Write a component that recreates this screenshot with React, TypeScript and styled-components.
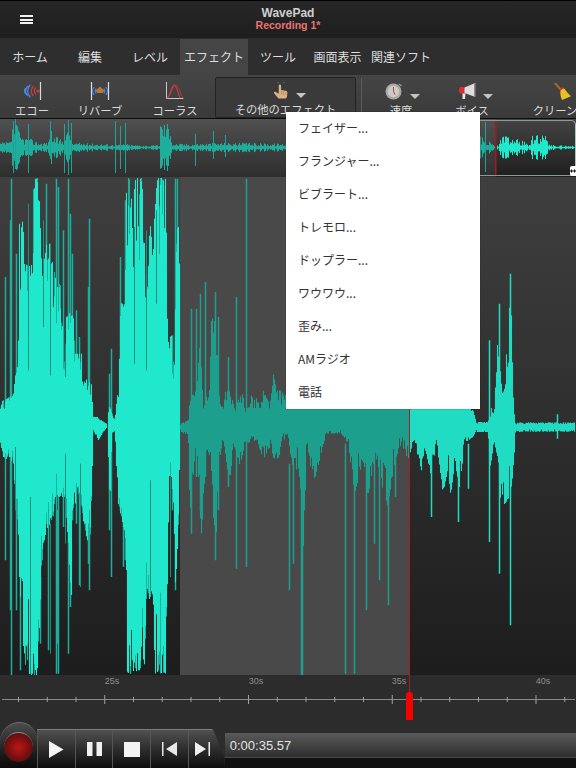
import React from 'react';
import styled, { createGlobalStyle } from 'styled-components';

const GlobalStyle = createGlobalStyle`
  html, body {
    margin: 0;
    padding: 0;
    background: #111;
  }
`;

const Page = styled.div`
  position: relative;
  display: flex;
  flex-direction: column;
  width: 576px;
  height: 768px;
  overflow: hidden;
  font-family: 'Noto Sans CJK JP', 'Liberation Sans', sans-serif;
  color: #ddd;
`;

const TitleBar = styled.header`
  position: relative;
  display: flex;
  flex-direction: column;
  align-items: center;
  justify-content: center;
  height: 38px;
  box-sizing: border-box;
  padding-bottom: 1px;
  border-top: 1px solid #000;
  background: linear-gradient(#272727, #1e1e1e);
  font-family: 'Liberation Sans', sans-serif;
  font-weight: bold;
`;

const MenuButton = styled.div`
  position: absolute;
  left: 20px;
  top: 14px;
  display: flex;
  flex-direction: column;
  gap: 1.5px;
  width: 13px;
`;

const MenuBar = styled.span`
  height: 2px;
  background: #f2f2f2;
`;

const AppName = styled.div`
  font-size: 12px;
  line-height: 13px;
  color: #cfcfcf;
`;

const FileName = styled.div`
  font-size: 10.5px;
  line-height: 11px;
  color: #e97474;
`;

const TabBar = styled.nav`
  display: flex;
  height: 37px;
  background: #2e2e2e;
`;

const Tab = styled.div<{ $w: number; $active?: boolean }>`
  display: flex;
  align-items: center;
  justify-content: center;
  width: ${(p) => p.$w}px;
  margin-top: 1px;
  font-size: 12px;
  color: #dedede;
  background: ${(p) => (p.$active ? '#454545' : 'transparent')};
`;

const Ribbon = styled.div`
  display: flex;
  height: 43px;
  overflow: hidden;
  border-bottom: 1px solid #0c0c0c;
  background: linear-gradient(#454545, #3a3a3a);
`;

const RibbonItem = styled.div<{ $w: number; $ml?: number }>`
  flex: none;
  display: flex;
  flex-direction: column;
  align-items: center;
  width: ${(p) => p.$w}px;
  margin-left: ${(p) => p.$ml ?? 0}px;
`;

const RibbonGroup = styled.div`
  flex: none;
  display: flex;
  flex-direction: column;
  align-items: center;
  box-sizing: border-box;
  width: 141px;
  height: 41px;
  margin: 2px 0 0 1px;
  border: 1px solid #222;
  border-radius: 2px;
  background: #3a3a3a;
`;

const RibbonDivider = styled.div`
  flex: none;
  width: 1px;
  height: 40px;
  margin: 3px 4px 0 5px;
  background: #5c5c5c;
`;

const IconRow = styled.div<{ $pad?: number; $h?: number }>`
  display: flex;
  align-items: flex-end;
  gap: 7px;
  height: ${(p) => p.$h ?? 25}px;
  padding-left: ${(p) => p.$pad ?? 0}px;
`;

const RibbonLabel = styled.div`
  margin-top: 3px;
  font-size: 11.3px;
  line-height: 15px;
  white-space: nowrap;
  color: #dcdcdc;
`;

const DropArrow = styled.span`
  width: 0;
  height: 0;
  margin-bottom: 1px;
  border-left: 5.5px solid transparent;
  border-right: 5.5px solid transparent;
  border-top: 5px solid #c4c4c4;
`;

const OverviewStrip = styled.div`
  position: relative;
  height: 58px;
  background: linear-gradient(#434343, #1f1f1f);
`;

const OverviewFrame = styled.div`
  position: absolute;
  left: 400px;
  right: 0;
  top: 1px;
  bottom: 1px;
  border-top: 1px solid #8c9a9a;
  border-bottom: 1px solid #8c9a9a;
  border-right: 1px solid #b5c0c0;
  border-radius: 0 5px 5px 0;
`;

const FrameHandle = styled.div`
  position: absolute;
  right: 0;
  bottom: 1px;
  display: flex;
  align-items: center;
  justify-content: center;
  width: 6px;
  height: 10px;
  border-radius: 2px 0 0 2px;
  background: #fff;
`;

const Canvas = styled.svg`
  display: block;
  position: absolute;
  left: 0;
  top: 0;
`;

const WaveArea = styled.div`
  position: relative;
  height: 499px;
  background: linear-gradient(#3f3f3f, #1d1d1d);
`;

const Ruler = styled.div`
  position: relative;
  height: 47px;
  background: #2c2c2c;
`;

const PlayLine = styled.div`
  position: absolute;
  left: 409px;
  top: 176px;
  width: 1px;
  height: 518px;
  background: #a81d1d;
`;

const PlayThumb = styled.div`
  position: absolute;
  left: 406px;
  top: 692px;
  width: 7px;
  height: 28px;
  border-radius: 3px 3px 0 0;
  background: #f60000;
`;

const EffectMenu = styled.ul`
  position: absolute;
  left: 286px;
  top: 112px;
  width: 194px;
  margin: 0;
  padding: 0;
  list-style: none;
  background: #fff;
  box-shadow: 0 0 1px rgba(0, 0, 0, 0.5);
`;

const EffectItem = styled.li`
  display: flex;
  align-items: center;
  box-sizing: border-box;
  height: 33px;
  padding: 0 0 2px 12px;
  font-size: 12px;
  color: #333;
`;

const Transport = styled.footer`
  display: flex;
  align-items: flex-end;
  height: 46px;
  background: #2c2c2c;
`;

const RecordDome = styled.div`
  flex: none;
  display: flex;
  justify-content: center;
  align-items: center;
  width: 37px;
  height: 46px;
  box-sizing: border-box;
  padding-top: 2px;
  border-radius: 20px 18px 0 0;
  border-top: 1px solid #6a6a6a;
  background: linear-gradient(#4c4c4c, #1a1a1a 70%, #0a0a0a);
`;

const RecordButton = styled.div`
  width: 29px;
  height: 30px;
  box-sizing: border-box;
  border-radius: 50%;
  border-top: 1px solid #8a8a8a;
  background: radial-gradient(circle, #b81818 0, #a01212 24%, #7a1010 50%, #4a1010 85%, #361616 100%);
`;

const Controls = styled.div`
  flex: none;
  display: flex;
  height: 39px;
  box-sizing: border-box;
  border-top: 1px solid #7c7c7c;
  background: linear-gradient(#505050, #2a2a2a 55%, #0d0d0d);
`;

const ControlButton = styled.div<{ $w?: number; $last?: boolean }>`
  display: flex;
  align-items: center;
  justify-content: ${(p) => (p.$last ? 'flex-end' : 'center')};
  width: ${(p) => p.$w ?? 37.7}px;
  padding-right: ${(p) => (p.$last ? 2 : 0)}px;
  border-left: 1px solid #555;
  box-sizing: border-box;
`;

const ControlEnd = styled.div`
  flex: none;
  width: 13px;
  height: 39px;
  background: linear-gradient(#505050, #2a2a2a 55%, #0d0d0d);
  clip-path: polygon(0 0, 10% 0, 100% 75%, 100% 100%, 0 100%);
`;

const TimeColumn = styled.div`
  flex: 1;
  display: flex;
  flex-direction: column;
  height: 35px;
  background: #101010;
`;

const TimeBar = styled.div`
  display: flex;
  align-items: center;
  height: 24px;
  padding-left: 5px;
  border-bottom: 1px solid #4a4a4a;
  background: linear-gradient(#5a5a5a, #2e2e2e);
  font: 13px 'Liberation Sans', sans-serif;
  color: #e2e2e2;
`;

const BRIGHT = '#20e8cc';
const DIM = '#1d9f8e';
const RIGHT = '#1fdcc2';
const EDGE = '#1caf9c';

type Pt = [number, number];

const interp = (pts: Pt[], x: number) => {
  for (let i = 1; i < pts.length; i++) {
    const [x0, y0] = pts[i - 1];
    const [x1, y1] = pts[i];
    if (x <= x1) return x1 === x0 ? y1 : y0 + ((y1 - y0) * (x - x0)) / (x1 - x0);
  }
  return pts[pts.length - 1][1];
};

const CENTER = 748;

// envelopes were read off a 3x crop of the wave, so every value is divided by 3.
// cut = how deep a column may fall short of its envelope
const columnsPath = (top: Pt[], bottom: Pt[], cut: number, seed0: number) => {
  let seed = seed0;
  const next = () => {
    seed = (seed * 9301 + 49297) % 233280;
    return seed / 233280;
  };
  let d = '';
  const from = Math.ceil(top[0][0] / 3);
  const to = Math.floor(top[top.length - 1][0] / 3);
  for (let x = from; x < to; x++) {
    const zx = x * 3 + 1.5;
    const a = interp(top, zx);
    const b = interp(bottom, zx);
    const ra = next();
    const rb = next();
    const t = CENTER + (a - CENTER) * (1 - cut * ra * ra * ra);
    const u = CENTER + (b - CENTER) * (1 - cut * rb * rb * rb);
    d += `M${x + 0.5} ${(t / 3).toFixed(1)}V${(u / 3).toFixed(1)}`;
  }
  return d;
};

const oneTop: Pt[] = [[0, 700], [8, 670], [40, 655], [45, 600], [55, 560], [58, 130], [70, 130], [72, 260], [95, 260], [100, 3], [120, 3], [122, 200], [132, 290], [135, 200], [150, 200], [152, 260], [160, 250], [165, 300], [185, 330], [190, 500], [195, 570], [200, 400], [222, 420], [225, 530], [245, 530], [250, 600], [275, 620], [280, 720], [295, 720], [305, 730], [322, 742]];
const oneBottom: Pt[] = [[0, 790], [10, 840], [40, 860], [45, 960], [55, 1050], [58, 1200], [72, 1470], [82, 1490], [100, 1495], [115, 1495], [120, 1300], [130, 1100], [150, 1040], [160, 1030], [165, 960], [195, 960], [205, 1100], [215, 1280], [218, 1000], [240, 950], [250, 1030], [270, 1130], [278, 850], [280, 760], [296, 790], [310, 765], [322, 750]];

const twoTop: Pt[] = [[322, 742], [328, 680], [335, 700], [345, 730], [350, 670], [358, 620], [360, 320], [365, 380], [375, 380], [380, 3], [392, 3], [398, 150], [405, 3], [430, 3], [435, 280], [445, 280], [450, 130], [460, 240], [465, 3], [497, 3], [500, 190], [505, 470], [515, 470], [520, 560], [525, 500], [530, 150], [539, 150], [540, 745]];
const twoBottom: Pt[] = [[322, 750], [330, 1000], [336, 770], [345, 760], [350, 880], [355, 990], [365, 1020], [378, 1100], [382, 1490], [420, 1480], [435, 1470], [440, 1270], [460, 1260], [465, 1490], [497, 1490], [505, 1100], [507, 900], [515, 900], [522, 1000], [527, 1240], [537, 1020], [540, 760]];

const dimTop: Pt[] = [[540, 745], [545, 738], [565, 730], [570, 660], [590, 640], [600, 490], [610, 640], [625, 670], [635, 420], [650, 420], [660, 680], [670, 690], [680, 620], [690, 640], [700, 650], [705, 710], [715, 660], [730, 650], [735, 710], [745, 680], [755, 650], [770, 660], [780, 690], [790, 640], [810, 680], [820, 590], [830, 640], [840, 640], [850, 640], [1229, 640]];
const dimBottom: Pt[] = [[540, 765], [565, 775], [570, 1010], [590, 790], [600, 1000], [605, 1080], [620, 820], [632, 840], [640, 1020], [650, 1100], [660, 860], [670, 790], [680, 860], [690, 930], [700, 800], [720, 870], [735, 800], [770, 790], [790, 850], [810, 810], [830, 870], [850, 790], [864, 780], [874, 850], [884, 900], [894, 860], [904, 960], [899, 1200], [904, 1300], [912, 1200], [919, 800], [934, 880], [944, 910], [964, 830], [979, 770], [1024, 770], [1044, 800], [1064, 950], [1084, 880], [1104, 960], [1124, 850], [1144, 920], [1164, 990], [1184, 860], [1204, 800], [1229, 860]];

const rightTop: Pt[] = [[1230, 640], [1404, 640], [1429, 735], [1464, 735], [1469, 700], [1484, 680], [1494, 460], [1504, 620], [1514, 620], [1524, 460], [1532, 290], [1536, 450], [1539, 620], [1546, 738], [1564, 736], [1726, 736]];
const rightBottom: Pt[] = [[1230, 830], [1244, 790], [1264, 890], [1274, 810], [1294, 900], [1309, 800], [1329, 950], [1344, 880], [1354, 970], [1364, 850], [1379, 940], [1394, 800], [1419, 780], [1429, 765], [1464, 765], [1469, 880], [1484, 800], [1494, 850], [1504, 1000], [1534, 950], [1544, 820], [1546, 768], [1564, 764], [1726, 764]];

// thin peaks: x, top, bottom (3x crop coordinates)
const peaksBright = [
  [15, 300, 1150], [30, 130, 1300], [33, 5, 1495], [48, 230, 1300], [140, 20, 1040], [145, 1000, 1420], [168, 5, 1490],
  [175, 30, 1490], [190, 160, 1050], [205, 5, 1430], [210, 110, 1290], [218, 230, 1030], [228, 400, 1040], [238, 480, 1225],
  [265, 330, 1160], [268, 125, 1240], [328, 590, 1060], [333, 515, 1200], [360, 240, 1000], [375, 70, 1150], [390, 700, 1490],
  [517, 475, 1000], [527, 5, 1240], [533, 5, 1020], [60, 1000, 1480], [122, 1200, 1400], [172, 1000, 1400], [370, 800, 1170],
];

const peaksDim = [
  [738, 5, 1170], [617, 315, 900], [645, 345, 1150], [600, 350, 1000], [575, 395, 1070], [710, 360, 1175], [590, 395, 900],
  [685, 540, 930], [655, 420, 1000], [869, 860, 1240], [879, 860, 1160], [904, 900, 1495], [908, 1000, 1495], [1036, 800, 1490],
  [1064, 800, 1490], [1099, 800, 1300], [1124, 800, 1100], [1139, 800, 1210], [1166, 800, 1285], [1186, 800, 960],
];

const peaksRight = [
  [1532, 290, 1345], [1497, 380, 1190], [1468, 490, 1095], [1294, 800, 1020], [1376, 800, 1035], [1404, 800, 935], [1672, 712, 785],
];

const notches = [
  [85, 80, 580], [130, 130, 450], [152, 200, 595], [195, 500, 600], [440, 160, 580], [468, 100, 380], [402, 150, 560],
  [196, 830, 1100], [240, 860, 1230], [90, 960, 1490], [150, 1040, 1430], [450, 910, 1240], [512, 900, 1200], [45, 810, 1000],
];

const linesPath = (list: number[][]) => list.map(([x, a, b]) => `M${Math.floor(x / 3) + 0.5} ${a / 3}V${b / 3}`).join('');

// overview strip: amplitude by x, with a repeatable jitter per column
const overviewAmp: Pt[] = [
  [0, 5], [10, 6], [12, 20], [17, 24], [20, 12], [30, 9], [40, 5], [48, 6], [50, 22], [53, 12], [62, 8], [70, 22], [72, 5], [100, 4], [115, 3],
  [125, 4], [130, 3], [150, 2], [159, 3], [160, 27], [170, 27], [172, 4], [190, 4], [225, 5], [290, 4], [480, 12], [485, 8], [495, 3], [498, 3],
  [500, 11], [505, 12], [510, 10], [520, 8], [528, 4], [532, 12], [545, 13], [548, 3], [575, 1.5],
];

const overviewPeaks = [
  [13, 2, 54], [15, 0, 50], [28, 5, 54], [50, 2, 40], [64, 5, 54], [68, 1, 56], [71, 4, 54], [115, 2, 54], [120, 7, 50], [125, 4, 54],
  [195, 15, 47], [213, 12, 40], [225, 16, 38], [485, 3, 53],
];

const overviewPath = (from: number, to: number) => {
  let seed = 37 + from;
  let d = '';
  for (let x = from; x < to; x++) {
    seed = (seed * 9301 + 49297) % 233280;
    const a = interp(overviewAmp, x) * (0.25 + (0.75 * seed) / 233280);
    d += `M${x + 0.5} ${(28.5 - a).toFixed(1)}V${(28.5 + a).toFixed(1)}`;
  }
  return d;
};

const rulerTicks = Array.from({ length: 20 }, (_, i) => {
  const x = 18.5 + i * 28.75;
  return { x, major: i % 5 === 3 };
});

const rulerLabels = [
  { x: 112, text: '25s' },
  { x: 256, text: '30s' },
  { x: 399, text: '35s' },
  { x: 543, text: '40s' },
];

const tabs = [
  { label: 'ホーム', w: 60 },
  { label: '編集', w: 60 },
  { label: 'レベル', w: 60 },
  { label: 'エフェクト', w: 68, active: true },
  { label: 'ツール', w: 60 },
  { label: '画面表示', w: 59 },
  { label: '関連ソフト', w: 68 },
];

const effects = ['フェイザー...', 'フランジャー...', 'ビブラート...', 'トレモロ...', 'ドップラー...', 'ワウワウ...', '歪み...', 'AMラジオ', '電話'];

const EchoIcon = () => (
  <svg width="20" height="18" viewBox="0 0 20 18" fill="none" strokeWidth="1.3" strokeLinecap="round">
    <path d="M3.500 6.500a4 4 0 0 0 0 5M5.500 4.500a7 7 0 0 0 0 9M8 3a9 9 0 0 0 0 12" stroke="#4d86e0" />
    <path d="M11 4.500a7 7 0 0 0 0 9M13.500 6a5 5 0 0 0 0 6" stroke="#d23a3a" />
    <circle cx="16" cy="9" r="1.500" fill="#d23a3a" />
    <path d="M18.500 0v18" stroke="#d8d8d8" strokeWidth="1.200" />
  </svg>
);

const ReverbIcon = () => (
  <svg width="20" height="18" viewBox="0 0 20 18" fill="none" strokeWidth="1.200">
    <path d="M1.500 0v18M18.500 0v18" stroke="#dcdcdc" />
    <path d="M4 5a7 7 0 0 0 0 8M6 6.500a5 5 0 0 0 0 5M16 5a7 7 0 0 1 0 8M14 6.500a5 5 0 0 1 0 5" stroke="#4d86e0" />
    <path d="M10 4.500l2 2 2.500 2-2 2.500h-5l-2-2.500 2.500-2z" fill="#b87a3a" />
  </svg>
);

const ChorusIcon = () => (
  <svg width="20" height="18" viewBox="0 0 20 18" fill="none" strokeWidth="1">
    <path d="M1.500 0v16.500h17" stroke="#c8c8c8" />
    <path d="M2 16c3-1 3.500-10 7-13 3 0 4 9 6 13" stroke="#d23a3a" strokeWidth="1.200" />
    <path d="M5 13c2-4 3-9 6-10 3 1 4 9 7 13" stroke="#b84444" strokeWidth="0.800" />
  </svg>
);

const HandIcon = () => (
  <svg width="16" height="17" viewBox="0 0 17 19">
    <path d="M5 1.500a3.500 3 0 0 1 7 0" fill="none" stroke="#3f7f8c" strokeWidth="1.400" />
    <path d="M6 4a1.300 1.300 0 0 1 2.600 0v5l5 .8c1.500.3 2 1 2 2.400l-.4 4c-.2 1.400-1 2.300-2.500 2.300H7c-1.200 0-2-.6-2.500-1.500L.8 12.500c-.5-1 .7-2 1.800-1.200L6 13z" fill="#dcb184" />
    <path d="M9 10v4M11.500 10.500v4M14 11v3" stroke="#a97e54" strokeWidth="0.700" />
  </svg>
);

const StopwatchIcon = () => (
  <svg width="18" height="18" viewBox="0 0 18 18">
    <path d="M14 2l2.500 2" stroke="#999" strokeWidth="1.500" />
    <circle cx="8.500" cy="9.500" r="8" fill="#a8a8a8" />
    <circle cx="8.500" cy="9.500" r="5.800" fill="#cfc9c4" />
    <path d="M8.500 5v4.500l1.500 3" stroke="#a83a3a" strokeWidth="0.900" fill="none" />
  </svg>
);

const MegaphoneIcon = () => (
  <svg width="17" height="17" viewBox="0 0 17 17">
    <path d="M3.500 10l3 .6-.5 5.400H3.500z" fill="#e8e8e8" />
    <rect x="0" y="4" width="6" height="6.500" rx="2" fill="#d83030" />
    <path d="M5.500 4.500L15 .5v13l-9.500-3.500z" fill="#dedede" />
    <path d="M15 0h1.500v14H15z" fill="#8c8c8c" />
  </svg>
);

const BroomIcon = () => (
  <svg width="18" height="17" viewBox="0 0 18 17">
    <path d="M1 0l6 7" stroke="#a86a2c" strokeWidth="2" />
    <path d="M5.500 6l3.500-2 .8 1.800-3.200 2z" fill="#c43a2a" />
    <path d="M6.500 7.500l3.500-2.300c2.500 3 4.500 6 7 8l-9 3.800c-1.300-3-2-6.500-1.500-9.500z" fill="#e8c020" />
  </svg>
);

const ResizeArrows = () => (
  <svg width="6" height="6" viewBox="0 0 6 6">
    <path d="M0 3l2-2v1.500h2V1l2 2-2 2V3.500H2V5z" fill="#111" />
  </svg>
);

const PlayIcon = () => (
  <svg width="15" height="17" viewBox="0 0 15 17"><path d="M0 0l14.500 8.500L0 17z" fill="#f4f4f4" /></svg>
);

const PauseIcon = () => (
  <svg width="15" height="14" viewBox="0 0 15 14"><path d="M0 0h5.500v14H0zM9.500 0H15v14H9.500z" fill="#f0f0f0" /></svg>
);

const StopIcon = () => (
  <svg width="16" height="15" viewBox="0 0 16 15"><rect width="16" height="15" fill="#f4f4f4" /></svg>
);

const PrevIcon = () => (
  <svg width="15" height="14" viewBox="0 0 15 14"><path d="M0 0h1.500v14H0zM15 0v14L4 7z" fill="#e8e8e8" /></svg>
);

const NextIcon = () => (
  <svg width="15" height="14" viewBox="0 0 15 14"><path d="M13.500 0H15v14h-1.500zM0 0v14l11-7z" fill="#f0f0f0" /></svg>
);

export default function App() {
  return (
    <Page>
      <GlobalStyle />
      <TitleBar>
        <MenuButton>
          <MenuBar />
          <MenuBar />
          <MenuBar />
        </MenuButton>
        <AppName>WavePad</AppName>
        <FileName>Recording 1*</FileName>
      </TitleBar>

      <TabBar>
        {tabs.map((t) => (
          <Tab key={t.label} $w={t.w} $active={t.active}>
            {t.label}
          </Tab>
        ))}
      </TabBar>

      <Ribbon>
        <RibbonItem $w={64}>
          <IconRow><EchoIcon /></IconRow>
          <RibbonLabel>エコー</RibbonLabel>
        </RibbonItem>
        <RibbonItem $w={72}>
          <IconRow><ReverbIcon /></IconRow>
          <RibbonLabel>リバーブ</RibbonLabel>
        </RibbonItem>
        <RibbonItem $w={78}>
          <IconRow><ChorusIcon /></IconRow>
          <RibbonLabel>コーラス</RibbonLabel>
        </RibbonItem>
        <RibbonGroup>
          <IconRow $pad={8} $h={22}><HandIcon /><DropArrow /></IconRow>
          <RibbonLabel>その他のエフェクト</RibbonLabel>
        </RibbonGroup>
        <RibbonDivider />
        <RibbonItem $w={70}>
          <IconRow $pad={2}><StopwatchIcon /><DropArrow /></IconRow>
          <RibbonLabel>速度</RibbonLabel>
        </RibbonItem>
        <RibbonItem $w={72}>
          <IconRow $pad={7}><MegaphoneIcon /><DropArrow /></IconRow>
          <RibbonLabel>ボイス</RibbonLabel>
        </RibbonItem>
        <RibbonItem $w={70} $ml={12}>
          <IconRow $pad={16}><BroomIcon /></IconRow>
          <RibbonLabel>クリーン</RibbonLabel>
        </RibbonItem>
      </Ribbon>

      <OverviewStrip>
        <Canvas width="576" height="58" viewBox="0 0 576 58">
          <rect x="0" y="0" width="496" height="58" fill="#fff" opacity="0.07" />
          <path d={overviewPath(0, 496)} stroke="#1fae9b" strokeWidth="1" />
          <path d={overviewPeaks.map(([x, a, b]) => `M${x + 0.5} ${a}V${b}`).join('')} stroke="#1fa493" strokeWidth="1" />
          <path d={overviewPath(497, 575)} stroke={BRIGHT} strokeWidth="1" />
          <rect x="495" y="1" width="1.500" height="55" fill="#a01c1c" />
        </Canvas>
        <OverviewFrame />
        <FrameHandle><ResizeArrows /></FrameHandle>
      </OverviewStrip>

      <WaveArea>
        <Canvas width="576" height="499" viewBox="0 0 576 499">
          <rect x="180" y="0" width="230" height="499" fill="#494949" />
          <path d={linesPath(peaksBright)} stroke={EDGE} strokeWidth="1.5" fill="none" />
          <path d={columnsPath(oneTop, oneBottom, 1, 11)} stroke={EDGE} strokeWidth="1.1" fill="none" />
          <path d={columnsPath(twoTop, twoBottom, 1, 23)} stroke={EDGE} strokeWidth="1.1" fill="none" />
          <path d={columnsPath(oneTop, oneBottom, 0.35, 71)} stroke={BRIGHT} strokeWidth="1.1" fill="none" />
          <path d={columnsPath(twoTop, twoBottom, 0.35, 97)} stroke={BRIGHT} strokeWidth="1.1" fill="none" />
          <path d={linesPath(notches)} stroke="#1c8f80" strokeWidth="1" fill="none" />
          <path d={linesPath(peaksDim)} stroke={DIM} strokeWidth="1.5" fill="none" />
          <path d={columnsPath(dimTop, dimBottom, 0.5, 41)} stroke={DIM} strokeWidth="1.1" fill="none" />
          <path d={linesPath(peaksRight)} stroke={RIGHT} strokeWidth="1.5" fill="none" />
          <path d={columnsPath(rightTop, rightBottom, 0.45, 59)} stroke={RIGHT} strokeWidth="1.1" fill="none" />
        </Canvas>
      </WaveArea>

      <Ruler>
        <Canvas width="576" height="47" viewBox="0 0 576 47">
          <path d="M2 24.500H575" stroke="#8a8a8a" strokeWidth="1" />
          {rulerTicks.map((t) => (
            <path key={t.x} d={t.major ? `M${t.x} 20V29` : `M${t.x} 22V27`} stroke="#a0a0a0" strokeWidth="1" />
          ))}
          {rulerLabels.map((l) => (
            <text key={l.text} x={l.x} y="8.500" textAnchor="middle" fontSize="9" fontFamily="Liberation Sans, sans-serif" fill="#8e8e8e">
              {l.text}
            </text>
          ))}
        </Canvas>
      </Ruler>

      <Transport>
        <RecordDome>
          <RecordButton />
        </RecordDome>
        <Controls>
          <ControlButton><PlayIcon /></ControlButton>
          <ControlButton><PauseIcon /></ControlButton>
          <ControlButton><StopIcon /></ControlButton>
          <ControlButton><PrevIcon /></ControlButton>
          <ControlButton $w={24} $last><NextIcon /></ControlButton>
        </Controls>
        <ControlEnd />
        <TimeColumn>
          <TimeBar>0:00:35.57</TimeBar>
        </TimeColumn>
      </Transport>

      <PlayLine />
      <PlayThumb />

      <EffectMenu>
        {effects.map((e) => (
          <EffectItem key={e}>{e}</EffectItem>
        ))}
      </EffectMenu>
    </Page>
  );
}
